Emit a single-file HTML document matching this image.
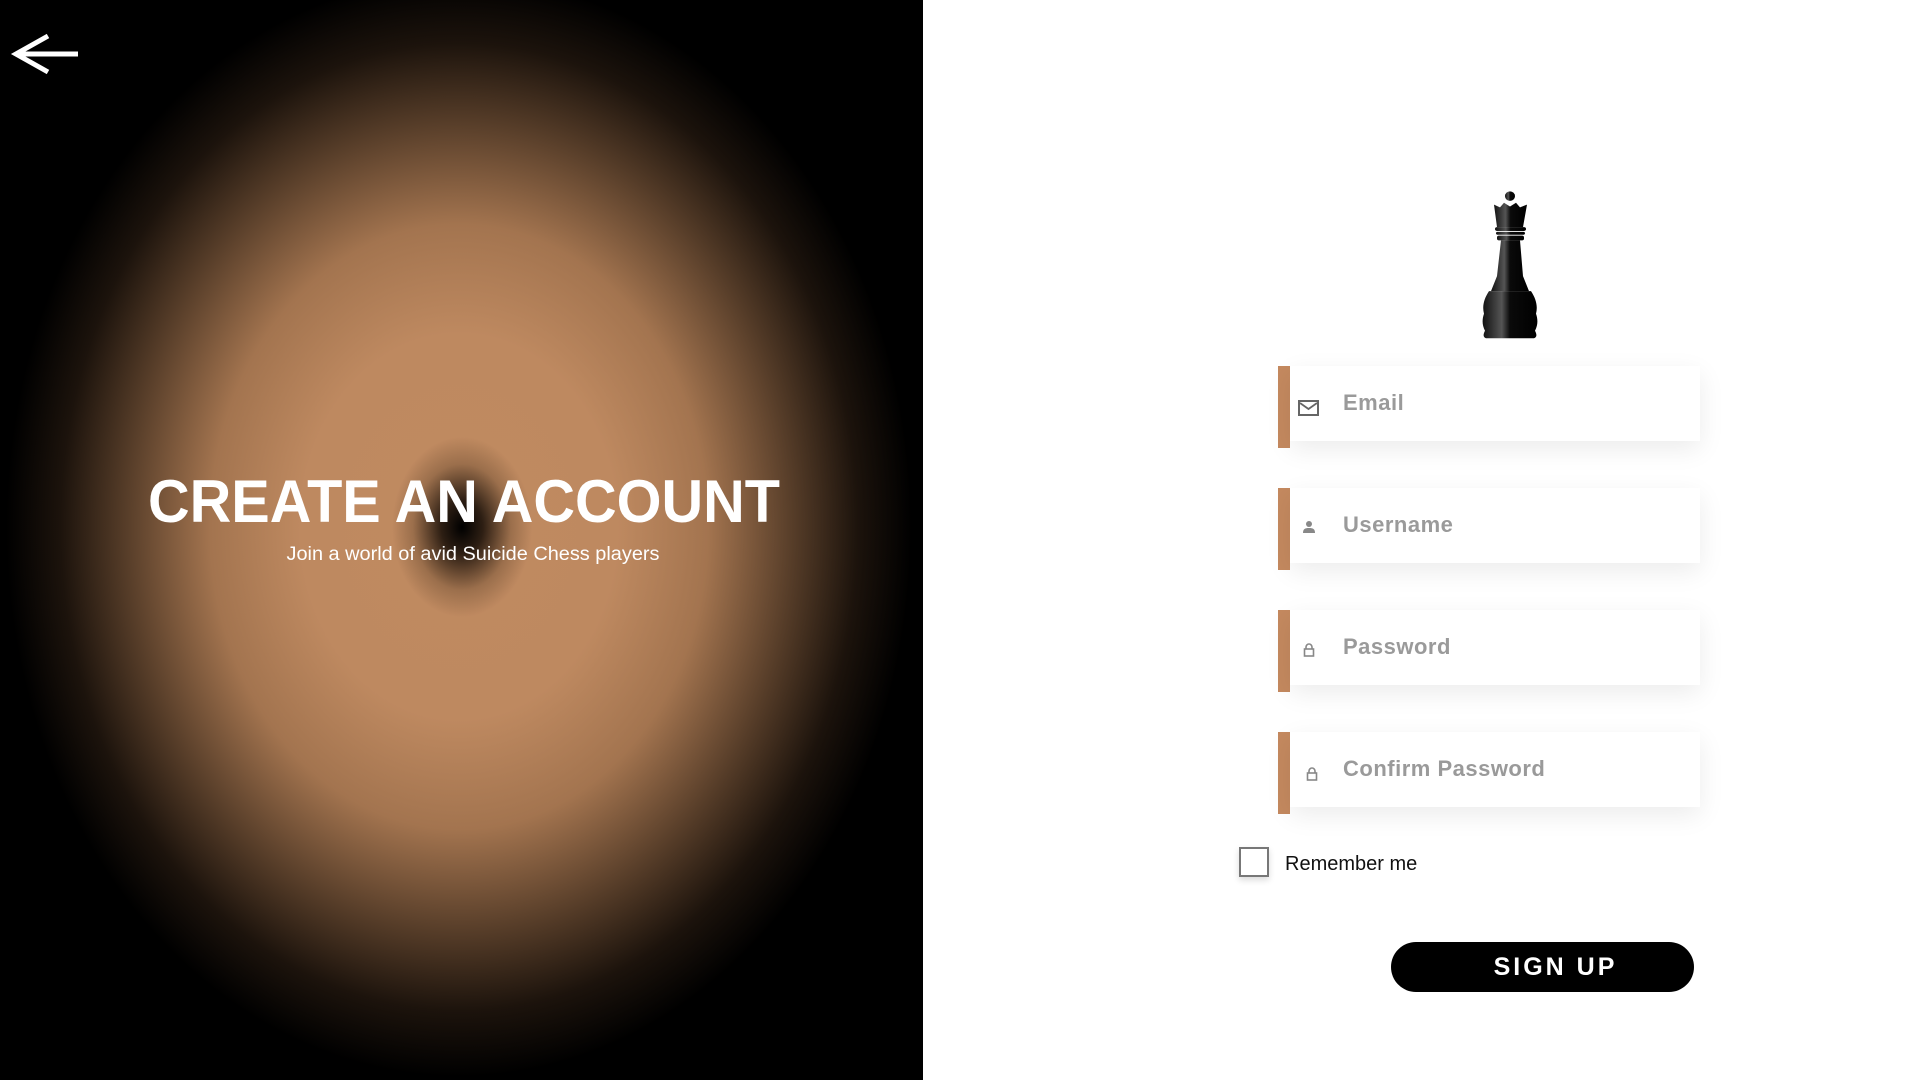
<!DOCTYPE html>
<html><head><meta charset="utf-8"><style>
*{margin:0;padding:0;box-sizing:border-box}
body{width:1920px;height:1080px;overflow:hidden;background:#fff;position:relative;font-family:"Liberation Sans",sans-serif}
#left{position:absolute;left:0;top:0;width:923px;height:1080px;background:#000;overflow:hidden}
#glow{position:absolute;left:6px;top:-23px;width:906px;height:1100px;border-radius:50%;background:radial-gradient(closest-side,#c08a60 0%,#be8960 35%,#a3744f 55%,#553c28 74%,#1c130c 88%,#000 100%)}
#spot{position:absolute;left:392px;top:437px;width:140px;height:180px;border-radius:50%;background:radial-gradient(closest-side,#000 0%,rgba(20,12,6,.85) 30%,rgba(100,70,45,.4) 70%,rgba(192,138,96,0) 100%)}
.field{position:absolute;left:1278px;width:422px;height:82px}
.field .bar{position:absolute;left:0;top:0;width:12px;height:82px;background:#c4895f}
.field .box{position:absolute;left:12px;top:0;width:410px;height:75px;background:#fff;box-shadow:0 8px 24px rgba(0,0,0,.08)}
.field .lbl{position:absolute;left:65px;top:24px;font-size:22px;font-weight:bold;color:#9a9a9a;letter-spacing:.5px}
.field svg{position:absolute}
</style></head><body>
<div id="left"><div id="glow"></div><div id="spot"></div>
<svg style="position:absolute;left:0;top:0" width="100" height="100"><path d="M78 54H18M48 36L16 54L48 72" stroke="#fff" stroke-width="5" fill="none"/></svg>
<svg style="position:absolute;left:0;top:458px" width="923" height="120">
<text x="464" y="64" text-anchor="middle" fill="#fff" font-family="Liberation Sans" font-weight="bold" font-size="60" textLength="632" lengthAdjust="spacingAndGlyphs">CREATE AN ACCOUNT</text>
<text x="473" y="102" text-anchor="middle" fill="#fff" font-family="Liberation Sans" font-size="19" textLength="373" lengthAdjust="spacingAndGlyphs">Join a world of avid Suicide Chess players</text>
</svg>
</div>
<svg style="position:absolute;left:1470px;top:182px" width="80" height="160" viewBox="0 0 80 170" preserveAspectRatio="none">
<defs><linearGradient id="g" x1="0" x2="1"><stop offset="0" stop-color="#111"/><stop offset=".35" stop-color="#555"/><stop offset=".5" stop-color="#0a0a0a"/><stop offset="1" stop-color="#000"/></linearGradient></defs>
<g fill="url(#g)">
<circle cx="40" cy="15" r="5"/>
<path d="M24 24L30 27L34 22L40 26L46 22L50 27L57 24L53 48L27 48Z"/>
<rect x="25" y="48" width="31" height="4" rx="2"/><rect x="26" y="53" width="29" height="3" rx="1.5"/><rect x="27" y="57" width="27" height="5" rx="2"/>
<path d="M31 62H50L53 100L59 116H21L27 100Z"/>
<path d="M19 116H61C66 124 68 132 66 140C68 146 68 152 65 158C67 162 67 165 64 166H16C13 165 13 162 15 158C12 152 12 146 14 140C12 132 14 124 19 116Z"/>
</g></svg>
<div class="field" style="top:366px"><div class="bar"></div><div class="box"></div>
<svg style="left:20px;top:34px" width="22" height="18"><rect x="1" y="1" width="19" height="14" fill="none" stroke="#666" stroke-width="2"/><path d="M2 3L10.5 9L19 3" fill="none" stroke="#666" stroke-width="1.8"/></svg>
<div class="lbl">Email</div></div>
<div class="field" style="top:488px"><div class="bar"></div><div class="box"></div>
<svg style="left:24px;top:32px" width="14" height="14"><circle cx="7" cy="4" r="3" fill="#888"/><path d="M1 13C1 9 3 8 7 8S13 9 13 13Z" fill="#888"/></svg>
<div class="lbl">Username</div></div>
<div class="field" style="top:610px"><div class="bar"></div><div class="box"></div>
<svg style="left:24px;top:32px" width="14" height="16"><path d="M4 7V5a3 3 0 0 1 6 0v2" fill="none" stroke="#888" stroke-width="1.6"/><rect x="2.5" y="7" width="9" height="7" fill="none" stroke="#888" stroke-width="1.6"/></svg>
<div class="lbl">Password</div></div>
<div class="field" style="top:732px"><div class="bar"></div><div class="box"></div>
<svg style="left:27px;top:34px" width="14" height="16"><path d="M4 7V5a3 3 0 0 1 6 0v2" fill="none" stroke="#888" stroke-width="1.6"/><rect x="2.5" y="7" width="9" height="7" fill="none" stroke="#888" stroke-width="1.6"/></svg>
<div class="lbl">Confirm Password</div></div>
<div style="position:absolute;left:1239px;top:847px;width:30px;height:30px;border:2px solid #777;box-shadow:0 3px 6px rgba(0,0,0,.15)"></div>
<div style="position:absolute;left:1285px;top:853px;font-size:20px;color:#111">Remember me</div>
<div style="position:absolute;left:1391px;top:942px;width:303px;height:50px;border-radius:25px;background:#000;color:#fff;font-weight:bold;font-size:25px;letter-spacing:3px;text-align:center;line-height:50px;padding-left:26px">SIGN UP</div>
</body></html>
